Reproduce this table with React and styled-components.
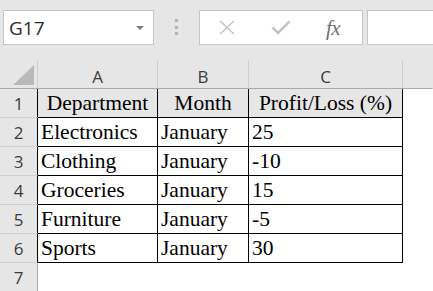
import React from "react";
import styled, { createGlobalStyle } from "styled-components";

const GlobalStyle = createGlobalStyle`
  html, body {
    margin: 0;
    padding: 0;
    background: #ffffff;
    overflow: hidden;
  }
  * { box-sizing: border-box; }
`;

const Window = styled.div`
  width: 433px;
  height: 291px;
  overflow: hidden;
  display: flex;
  flex-direction: column;
  background: #ffffff;
`;

/* ---------- formula bar ---------- */

const Toolbar = styled.div`
  height: 60px;
  flex-shrink: 0;
  display: flex;
  align-items: flex-start;
  padding: 10px 0 0 3px;
  background: #e6e6e6;
  overflow: hidden;
`;

const NameBox = styled.div`
  width: 151px;
  height: 35px;
  flex-shrink: 0;
  display: flex;
  align-items: center;
  justify-content: space-between;
  padding: 0 9px 0 5px;
  background: #ffffff;
  border: 1px solid #c6c6c6;
  font-family: "Open Sans", "Noto Sans", sans-serif;
  font-size: 19px;
  color: #2b2b2b;
`;

const Caret = styled.span`
  width: 0;
  height: 0;
  border-left: 4px solid transparent;
  border-right: 4px solid transparent;
  border-top: 4px solid #7b7b7b;
  margin-top: 1px;
`;

const Grip = styled.div`
  width: 45px;
  height: 35px;
  flex-shrink: 0;
  display: flex;
  flex-direction: column;
  align-items: center;
  padding-top: 9px;
  gap: 3.5px;
`;

const GripDot = styled.span`
  width: 3px;
  height: 3px;
  background: #b4b4b4;
`;

const FxBox = styled.div`
  width: 164px;
  height: 35px;
  flex-shrink: 0;
  display: grid;
  grid-template-columns: repeat(3, 1fr);
  background: #ffffff;
  border: 1px solid #c6c6c6;
`;

const FxSlot = styled.div`
  display: flex;
  align-items: center;
  justify-content: center;
`;

const FxLabel = styled.span`
  font-family: "Liberation Serif", "Times New Roman", serif;
  font-style: italic;
  font-size: 21px;
  color: #6f6f6f;
  letter-spacing: -0.5px;
  margin-left: -4px;
  margin-top: 1px;
`;

const FormulaInput = styled.div`
  width: 120px;
  height: 35px;
  flex-shrink: 0;
  margin-left: 4px;
  background: #ffffff;
  border: 1px solid #c6c6c6;
`;

/* ---------- sheet grid ---------- */

const Sheet = styled.div`
  flex: 1;
  display: grid;
  grid-template-columns: 38px 120px 91px 154px 1fr;
  grid-auto-rows: 29px;
  background: #ffffff;
`;

const Corner = styled.div`
  position: relative;
  background: #e6e6e6;
  border-right: 1px solid #d0d0d0;
  border-bottom: 1px solid #a9a9a9;
`;

const CornerMark = styled.svg`
  position: absolute;
  left: 13px;
  top: 5px;
`;

const ColHeader = styled.div`
  background: #e6e6e6;
  border-right: 1px solid ${(p) => (p.$last ? "transparent" : "#d0d0d0")};
  border-bottom: 1px solid #a9a9a9;
  display: flex;
  align-items: center;
  justify-content: center;
  padding-top: 4px;
  font-family: "Open Sans", "Noto Sans", sans-serif;
  font-size: 17px;
  color: #3c3c3c;
`;

const RowHeader = styled.div`
  background: #e6e6e6;
  border-right: 1px solid ${(p) => (p.$inTable ? "#000000" : "#a9a9a9")};
  border-bottom: 1px solid #d0d0d0;
  display: flex;
  align-items: center;
  justify-content: center;
  font-family: "Open Sans", "Noto Sans", sans-serif;
  font-size: 17px;
  color: #3c3c3c;
`;

const Cell = styled.div`
  background: ${(p) => (p.$head ? "#e6e6e6" : "#ffffff")};
  border-right: 1px solid ${(p) => (p.$boxed ? "#000000" : "transparent")};
  border-bottom: 1px solid ${(p) => (p.$boxed ? "#000000" : "transparent")};
  display: flex;
  align-items: center;
  justify-content: ${(p) => (p.$head ? "center" : "flex-start")};
  padding-left: ${(p) => (p.$head ? "0" : "3px")};
  font-family: "Liberation Serif", "Times New Roman", serif;
  font-size: 21.5px;
  color: #000000;
  white-space: nowrap;
  overflow: hidden;
`;

const columns = ["A", "B", "C", ""];

const rows = [
  ["Department", "Month", "Profit/Loss (%)"],
  ["Electronics", "January", "25"],
  ["Clothing", "January", "-10"],
  ["Groceries", "January", "15"],
  ["Furniture", "January", "-5"],
  ["Sports", "January", "30"],
  null,
];

function CrossIcon() {
  return (
    <svg width="18" height="15" viewBox="0 0 18 15">
      <path d="M2 1 L16 14 M16 1 L2 14" stroke="#c4c4c4" strokeWidth="1.5" fill="none" />
    </svg>
  );
}

function CheckIcon() {
  return (
    <svg width="20" height="15" viewBox="0 0 20 15">
      <path d="M1.5 7.5 L7 13 L18.5 1.5" stroke="#c4c4c4" strokeWidth="2.6" fill="none" />
    </svg>
  );
}

export default function App() {
  return (
    <>
      <GlobalStyle />
      <Window>
        <Toolbar>
          <NameBox>
            <span>G17</span>
            <Caret />
          </NameBox>
          <Grip>
            <GripDot />
            <GripDot />
            <GripDot />
          </Grip>
          <FxBox>
            <FxSlot>
              <CrossIcon />
            </FxSlot>
            <FxSlot>
              <CheckIcon />
            </FxSlot>
            <FxSlot>
              <FxLabel>fx</FxLabel>
            </FxSlot>
          </FxBox>
          <FormulaInput />
        </Toolbar>

        <Sheet>
          <Corner>
            <CornerMark width="22" height="20" viewBox="0 0 22 20">
              <polygon points="21,0 21,20 0,20" fill="#b9b9b9" />
            </CornerMark>
          </Corner>
          {columns.map((c, i) => (
            <ColHeader key={i} $last={i === columns.length - 1}>
              {c}
            </ColHeader>
          ))}

          {rows.map((r, ri) => (
            <React.Fragment key={ri}>
              <RowHeader $inTable={r !== null}>{ri + 1}</RowHeader>
              {r
                ? r.map((v, ci) => (
                    <Cell key={ci} $boxed $head={ri === 0}>
                      {v}
                    </Cell>
                  ))
                : [0, 1, 2].map((ci) => <Cell key={ci} />)}
              <Cell />
            </React.Fragment>
          ))}
        </Sheet>
      </Window>
    </>
  );
}
